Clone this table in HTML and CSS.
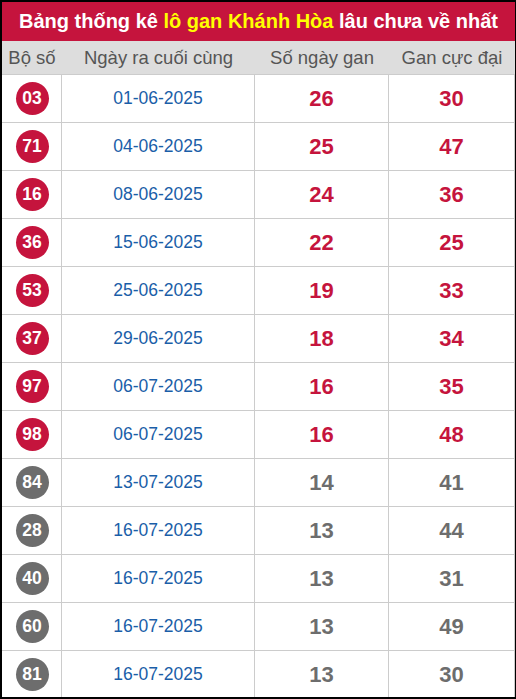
FILE: index.html
```html
<!DOCTYPE html>
<html lang="vi">
<head>
<meta charset="utf-8">
<title>Lô gan Khánh Hòa</title>
<link rel="stylesheet" href="styles.css">
</head>
<body>
<div class="board">
  <div class="title"><span>Bảng thống kê <span class="hl">lô gan Khánh Hòa</span> lâu chưa về nhất</span></div>
  <div class="row head">
    <div class="cell">Bộ số</div>
    <div class="cell">Ngày ra cuối cùng</div>
    <div class="cell">Số ngày gan</div>
    <div class="cell">Gan cực đại</div>
  </div>
  <div class="row"><div class="cell"><span class="ball">03</span></div><div class="cell date">01-06-2025</div><div class="cell num">26</div><div class="cell num">30</div></div>
  <div class="row"><div class="cell"><span class="ball">71</span></div><div class="cell date">04-06-2025</div><div class="cell num">25</div><div class="cell num">47</div></div>
  <div class="row"><div class="cell"><span class="ball">16</span></div><div class="cell date">08-06-2025</div><div class="cell num">24</div><div class="cell num">36</div></div>
  <div class="row"><div class="cell"><span class="ball">36</span></div><div class="cell date">15-06-2025</div><div class="cell num">22</div><div class="cell num">25</div></div>
  <div class="row"><div class="cell"><span class="ball">53</span></div><div class="cell date">25-06-2025</div><div class="cell num">19</div><div class="cell num">33</div></div>
  <div class="row"><div class="cell"><span class="ball">37</span></div><div class="cell date">29-06-2025</div><div class="cell num">18</div><div class="cell num">34</div></div>
  <div class="row"><div class="cell"><span class="ball">97</span></div><div class="cell date">06-07-2025</div><div class="cell num">16</div><div class="cell num">35</div></div>
  <div class="row"><div class="cell"><span class="ball">98</span></div><div class="cell date">06-07-2025</div><div class="cell num">16</div><div class="cell num">48</div></div>
  <div class="row muted"><div class="cell"><span class="ball">84</span></div><div class="cell date">13-07-2025</div><div class="cell num">14</div><div class="cell num">41</div></div>
  <div class="row muted"><div class="cell"><span class="ball">28</span></div><div class="cell date">16-07-2025</div><div class="cell num">13</div><div class="cell num">44</div></div>
  <div class="row muted"><div class="cell"><span class="ball">40</span></div><div class="cell date">16-07-2025</div><div class="cell num">13</div><div class="cell num">31</div></div>
  <div class="row muted"><div class="cell"><span class="ball">60</span></div><div class="cell date">16-07-2025</div><div class="cell num">13</div><div class="cell num">49</div></div>
  <div class="row muted"><div class="cell"><span class="ball">81</span></div><div class="cell date">16-07-2025</div><div class="cell num">13</div><div class="cell num">30</div></div>
</div>
</body>
</html>
```
FILE: styles.css
```css
html, body {
  margin: 0;
  background: #000;
}
body {
  height: 699px;
  overflow: hidden;
  padding: 2px 1px 0 2px;
  box-sizing: border-box;
  font-family: "Liberation Sans", Arial, sans-serif;
}
.board {
  width: 513px;
  height: 695px;
  overflow: hidden;
  background: #fff;
}
.title {
  height: 39px;
  background: #c5143d;
  color: #fff;
  font-weight: bold;
  font-size: 20px;
  display: flex;
  align-items: center;
  justify-content: center;
  white-space: nowrap;
}
.hl {
  color: #ffff00;
}
.row {
  display: grid;
  grid-template-columns: 60px 193px 134px 126px;
  height: 48px;
  box-sizing: border-box;
  border-top: 1px solid #cccccc;
}
.cell {
  display: flex;
  align-items: center;
  justify-content: center;
  border-right: 1px solid #cccccc;
  box-sizing: border-box;
}
.row.head {
  height: 33px;
  border-top: 0;
  background: #dddddd;
}
.row.head .cell {
  border-right: 0;
  color: #555;
  font-size: 18.5px;
}
.ball {
  width: 33px;
  height: 33px;
  border-radius: 50%;
  background: #c5143d;
  color: #fff;
  font-weight: bold;
  font-size: 17.5px;
  display: flex;
  align-items: center;
  justify-content: center;
  margin-left: 1px;
}
.date {
  color: #1a5ea8;
  font-size: 17.5px;
}
.num {
  color: #c5143d;
  font-weight: bold;
  font-size: 22px;
}
.muted .ball {
  background: #6d6d6d;
}
.muted .num {
  color: #6d6d6d;
}
```
